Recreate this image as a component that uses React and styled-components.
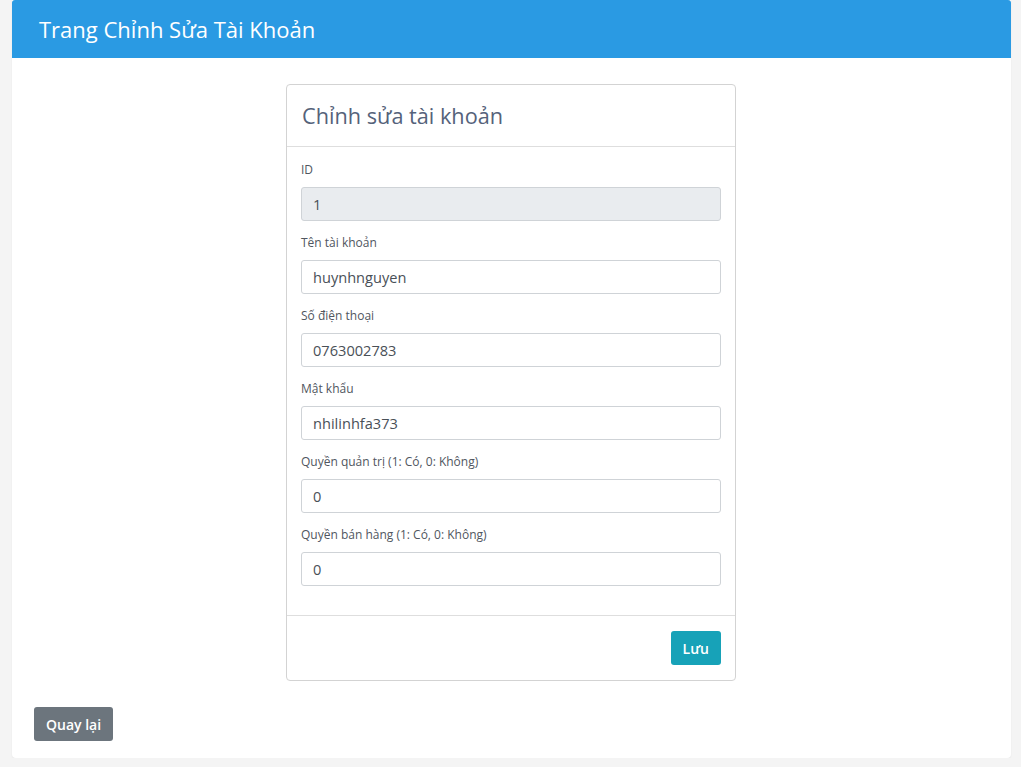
import React from 'react';
import styled, { createGlobalStyle } from 'styled-components';

const GlobalStyle = createGlobalStyle`
    body {
        margin: 0;
        background-color: #f4f4f4;
        font-family: "Open Sans", "Noto Sans", "Liberation Sans", sans-serif;
    }
    * {
        box-sizing: border-box;
    }
`

const Page = styled.div`
    margin: 0 10px 0 12px;
    background-color: white;
    border-radius: 0 0 4px 4px;
    box-shadow: 0 1px 2px rgba(0,0,0,0.06);
    padding-bottom: 17px;
`

const Header = styled.div`
    height: 58px;
    background-color: #2a9ae3;
    color: white;
    display: flex;
    align-items: center;
    padding: 0 27px;
    font-size: 22px;
    font-weight: 500;
    border-radius: 3px 3px 0 0;
`

const Content = styled.div`
    padding: 26px 22px 0 21px;
`

const Card = styled.div`
    width: 450px;
    margin: 0 auto;
    border: 1px solid #d3d3d3;
    border-radius: 4px;
    background: white;
`

const CardHeader = styled.div`
    padding: 15px 15px;
    border-bottom: 1px solid #dedede;
    color: #55627a;
    font-size: 21.7px;
    line-height: 31px;
`

const CardBody = styled.div`
    padding: 14px 14px 16px;
    border-bottom: 1px solid #dedede;
`

const Group = styled.div`
    margin-bottom: 13px;
`

const Label = styled.label`
    display: block;
    font-size: 12px;
    line-height: 18px;
    color: #505660;
    margin-bottom: 8px;
`

const Input = styled.input`
    display: block;
    width: 100%;
    height: 34px;
    padding: 0 11px;
    border: 1px solid #cfd3d7;
    border-radius: 3px;
    font-family: inherit;
    font-size: 14.6px;
    color: #495057;
    background-color: ${props => props.readOnly ? '#e9ecef' : 'white'};
    outline: none;
`

const CardFooter = styled.div`
    padding: 15px 14px;
    display: flex;
    justify-content: flex-end;
`

const Button = styled.button`
    height: 34px;
    padding: 0 12px;
    border: none;
    border-radius: 3px;
    font-family: inherit;
    font-size: 14px;
    font-weight: 600;
    color: white;
    background-color: ${props => props.color};
    cursor: pointer;
`

const BackRow = styled.div`
    margin-top: 26px;
    padding-left: 1px;
`

const fields = [
    { label: 'ID', value: '1', readOnly: true },
    { label: 'Tên tài khoản', value: 'huynhnguyen' },
    { label: 'Số điện thoại', value: '0763002783' },
    { label: 'Mật khẩu', value: 'nhilinhfa373' },
    { label: 'Quyền quản trị (1: Có, 0: Không)', value: '0' },
    { label: 'Quyền bán hàng (1: Có, 0: Không)', value: '0' },
]

function App() {
    return (
        <>
            <GlobalStyle />
            <Page>
                <Header>Trang Chỉnh Sửa Tài Khoản</Header>
                <Content>
                    <Card>
                        <CardHeader>Chỉnh sửa tài khoản</CardHeader>
                        <CardBody>
                            {fields.map(f => (
                                <Group key={f.label}>
                                    <Label>{f.label}</Label>
                                    <Input defaultValue={f.value} readOnly={f.readOnly} />
                                </Group>
                            ))}
                        </CardBody>
                        <CardFooter>
                            <Button color="#17a2b8">Lưu</Button>
                        </CardFooter>
                    </Card>
                    <BackRow>
                        <Button color="#6c757d">Quay lại</Button>
                    </BackRow>
                </Content>
            </Page>
        </>
    )
}

export default App;
